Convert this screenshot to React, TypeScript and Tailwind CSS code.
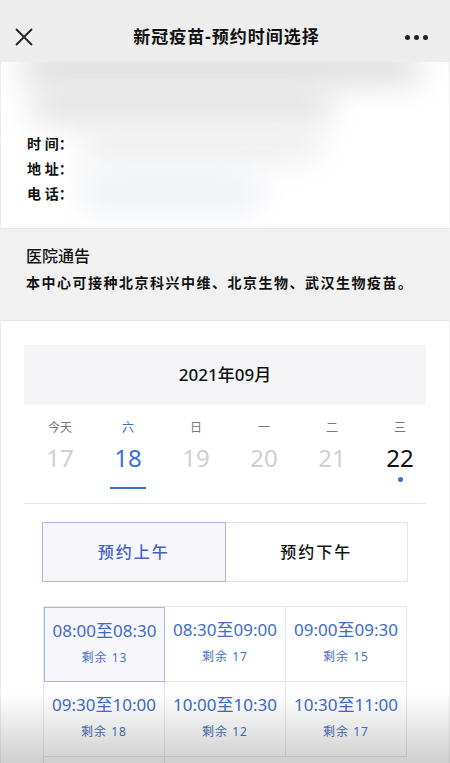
import React from "react";

// dati fasce orarie
const slots = [
  { time: "08:00至08:30", left: 13 },
  { time: "08:30至09:00", left: 17 },
  { time: "09:00至09:30", left: 15 },
  { time: "09:30至10:00", left: 18 },
  { time: "10:00至10:30", left: 12 },
  { time: "10:30至11:00", left: 17 },
];

const days = [
  { w: "今天", d: "17" },
  { w: "六", d: "18" },
  { w: "日", d: "19" },
  { w: "一", d: "20" },
  { w: "二", d: "21" },
  { w: "三", d: "22" },
];

function App() {
  return (
    <div
      className="relative w-[450px] h-[763px] overflow-hidden bg-[#ededed] text-[#111]"
      style={{ fontFamily: '"Noto Sans", "Noto Sans CJK SC", sans-serif' }}
    >
      {/* barra superiore */}
      <div className="h-[62px] flex items-center justify-between pl-[14px] pr-[22px] pt-[12px]">
        <svg width="20" height="20" viewBox="0 0 20 20" className="text-[#222]">
          <path d="M2 2L18 18M18 2L2 18" stroke="currentColor" strokeWidth="1.8" />
        </svg>
        <div className="text-[17px] font-bold tracking-[1px] ml-[14px]">新冠疫苗-预约时间选择</div>
        <div className="flex gap-[4px]">
          <span className="w-[5px] h-[5px] rounded-full bg-[#222]"></span>
          <span className="w-[5px] h-[5px] rounded-full bg-[#222]"></span>
          <span className="w-[5px] h-[5px] rounded-full bg-[#222]"></span>
        </div>
      </div>

      {/* scheda info sfocata */}
      <div className="relative mx-[1px] h-[166px] bg-white overflow-hidden">
        <div className="absolute left-[20px] top-[-10px] w-[400px] h-[30px] rounded-full bg-[#d8d8d8] blur-lg"></div>
        <div className="absolute left-[30px] top-[30px] w-[300px] h-[28px] rounded-full bg-[#dcdcdc] blur-lg"></div>
        <div className="absolute left-[80px] top-[68px] w-[240px] h-[30px] rounded-full bg-[#ececec] blur-lg"></div>
        <div className="absolute left-[80px] top-[110px] w-[180px] h-[40px] rounded-full bg-[#eef0f6] blur-lg"></div>
        <div className="relative pt-[71px] pl-[26px] flex flex-col gap-[6px] text-[14px] font-bold">
          <div className="h-[19px]">时 间：</div>
          <div className="h-[19px]">地 址：</div>
          <div className="h-[19px]">电 话：</div>
        </div>
      </div>

      {/* avviso ospedale */}
      <div className="h-[92px] bg-[#f1f1f1] px-[26px] pt-[15px] border-t border-[#e4e4e4]">
        <div className="text-[16px] font-medium">医院通告</div>
        <div className="mt-[4px] text-[14px] font-bold tracking-[1.5px] whitespace-nowrap">
          本中心可接种北京科兴中维、北京生物、武汉生物疫苗。
        </div>
      </div>

      {/* selezione data */}
      <div className="bg-white mx-[1px] px-[23px] pt-[24px] h-[460px] border-t border-[#e6e6e6]">
        <div className="h-[60px] bg-[#f5f5f7] flex items-center justify-center text-[17px] font-medium">
          2021年09月
        </div>
        <div className="grid grid-cols-6 h-[98px] ml-[2px] w-[408px]">
          {days.map((d, i) => (
            <div key={i} className="flex flex-col items-center pt-[15px]">
              <div className={"text-[12px] h-[16px] leading-[16px] " + (i === 1 ? "text-[#3a6fd8]" : "text-[#777]")}>
                {d.w}
              </div>
              <div
                className={
                  "text-[24px] leading-[30px] mt-[7px] " +
                  (i === 1 ? "text-[#3a6fd8]" : i === 5 ? "text-[#111]" : "text-[#cfcfcf]")
                }
              >
                {d.d}
              </div>
              {i === 1 && <div className="mt-[14px] w-[36px] h-[2px] bg-[#3a6fd8]"></div>}
              {i === 5 && <div className="mt-[4px] w-[5px] h-[5px] rounded-full bg-[#3a6fd8]"></div>}
            </div>
          ))}
        </div>
        <div className="h-px bg-[#e3e3e3]"></div>

        <div className="mx-[18px] mt-[18px] h-[60px] flex text-[16px] font-medium">
          <div className="flex-1 flex items-center justify-center bg-[#f7f6fa] border border-[#a9b6e6] text-[#3d64c8] tracking-[2px]">
            预约上午
          </div>
          <div className="flex-1 flex items-center justify-center border border-l-0 border-[#e6e6e6] tracking-[2px]">
            预约下午
          </div>
        </div>

        <div className="mx-[19px] mt-[24px] grid grid-cols-3 border-t border-l border-[#e6e6e6]">
          {slots.map((s, i) => (
            <div
              key={i}
              className={
                "h-[75px] flex flex-col items-center pt-[11px] border-r border-b " +
                (i === 0 ? "bg-[#f7f6fa] border border-[#a9b6e6]" : "border-[#e6e6e6]")
              }
            >
              <div className="text-[17px] leading-[24px] text-[#3d6cc9] whitespace-nowrap">{s.time}</div>
              <div className="mt-[6px] text-[12px] leading-[18px] text-[#4a6fc2] tracking-[1px]">剩余 {s.left}</div>
            </div>
          ))}
          <div className="h-[20px] border-r border-[#e6e6e6]"></div>
        </div>
      </div>

      {/* sfumatura inferiore del video */}
      <div className="absolute left-0 right-0 bottom-0 h-[70px] bg-gradient-to-b from-transparent to-[#00000030] pointer-events-none"></div>
    </div>
  );
}

export default App;
